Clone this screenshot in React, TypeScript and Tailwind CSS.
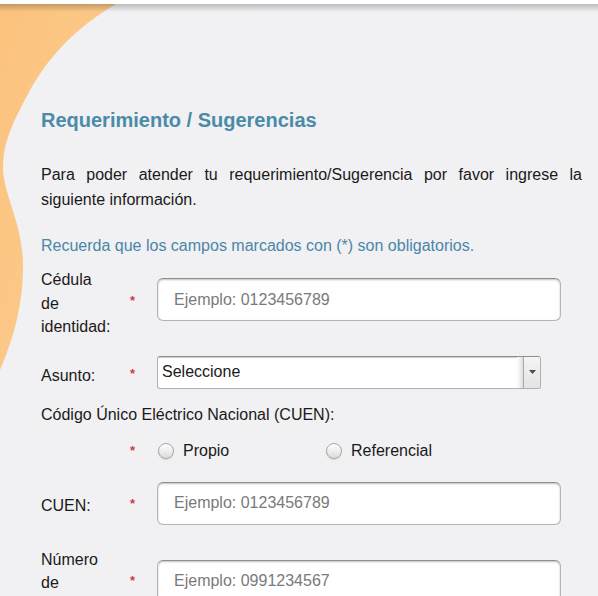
import React from "react";

const font = { fontFamily: '"Liberation Sans", Arial, sans-serif' };

function Star({ className = "" }: { className?: string }) {
  return (
    <span className={`w-[28px] shrink-0 pl-[1px] text-[13px] leading-[20px] font-bold text-[#d23a4c] ${className}`}>*</span>
  );
}

function TextInput({ placeholder, className = "" }: { placeholder: string; className?: string }) {
  return (
    <div
      className={`w-[404px] h-[43px] shrink-0 rounded-[6px] border border-[#b4b4b4] border-t-[#8e8e8e] bg-white shadow-[inset_0_1px_2px_rgba(0,0,0,0.25)] flex items-center pl-[16px] text-[16px] text-[#7a7a7a] ${className}`}
    >
      {placeholder}
    </div>
  );
}

function Radio({ label }: { label: string }) {
  return (
    <div className="flex items-center pl-[1px]">
      <span className="w-[16px] h-[16px] rounded-full border border-[#a8a8a8] bg-linear-to-b from-[#ffffff] to-[#dcdcdc] shadow-[0_1px_1px_rgba(0,0,0,0.12)]" />
      <span className="ml-[9px] text-[16px] leading-[24px] text-[#1a1a1a]">{label}</span>
    </div>
  );
}

export default function App() {
  return (
    <div style={font} className="relative w-full h-[596px] overflow-hidden bg-white text-[#1a1a1a]">
      <div className="h-[4px] bg-white" />
      <div className="relative h-[592px] bg-[#f1f0f2]">
        <svg className="absolute left-0 top-0" width="140" height="380" viewBox="0 0 140 380">
          <defs>
            <linearGradient id="og" x1="0" y1="0" x2="1" y2="1">
              <stop offset="0" stopColor="#fbc27d" />
              <stop offset="0.5" stopColor="#fcc887" />
              <stop offset="1" stopColor="#fbc47f" />
            </linearGradient>
          </defs>
          <path
            d="M0,0 L116,0 C78,22 48,52 28,90 C14,116 4,136 3,160 C2,190 23,218 23,262 C23,304 12,338 0,366 Z"
            fill="url(#og)"
          />
        </svg>
        <div className="absolute left-0 right-0 top-0 h-[8px] bg-linear-to-b from-[rgba(0,0,0,0.22)] to-transparent" />

        <div className="relative pl-[41px] pr-[16px]">
          <h1 className="pt-[104px] text-[20px] leading-[24px] font-bold text-[#4a8ba7]">
            Requerimiento / Sugerencias
          </h1>
          <p className="mt-[30px] text-[16px] leading-[25px] text-justify">
            Para poder atender tu requerimiento/Sugerencia por favor ingrese la siguiente información.
          </p>
          <p className="mt-[21px] text-[16px] leading-[25px] text-[#4a87aa]">
            Recuerda que los campos marcados con (*) son obligatorios.
          </p>

          {/* Cédula */}
          <div className="mt-[10px] flex items-start">
            <div className="w-[88px] shrink-0 text-[16px] leading-[23.5px]">
              Cédula
              <br />
              de
              <br />
              identidad:
            </div>
            <Star className="mt-[23px]" />
            <TextInput className="mt-[10px]" placeholder="Ejemplo: 0123456789" />
          </div>

          {/* Asunto */}
          <div className="mt-[17px] flex items-start">
            <div className="w-[88px] shrink-0 mt-[8px] text-[16px] leading-[24px]">Asunto:</div>
            <Star className="mt-[8px]" />
            <div className="w-[384px] h-[33px] shrink-0 flex rounded-[3px] border border-[#b0b0b0] border-t-[#8e8e8e] bg-white overflow-hidden">
              <div className="flex-1 pl-[4px] flex items-center text-[16px] text-[#1a1a1a] shadow-[inset_0_1px_1px_rgba(0,0,0,0.2)]">
                Seleccione
              </div>
              <div className="w-[6px] bg-linear-to-r from-[#ffffff] to-[#dedede]" />
              <div className="w-[1px] bg-[#a9a9a9]" />
              <div className="w-[16px] bg-linear-to-b from-[#f4f4f4] to-[#e4e4e4] flex items-center justify-center">
                <svg width="7" height="4" viewBox="0 0 7 4">
                  <path d="M0,0 L7,0 L3.5,4 Z" fill="#4a4a4a" />
                </svg>
              </div>
            </div>
          </div>

          {/* CUEN title */}
          <div className="mt-[14px] text-[16px] leading-[24px]">Código Único Eléctrico Nacional (CUEN):</div>

          {/* Radios */}
          <div className="mt-[12px] flex items-center">
            <div className="w-[88px] shrink-0" />
            <Star />
            <div className="w-[168px]">
              <Radio label="Propio" />
            </div>
            <Radio label="Referencial" />
          </div>

          {/* CUEN */}
          <div className="mt-[19px] flex items-start">
            <div className="w-[88px] shrink-0 mt-[12px] text-[16px] leading-[24px]">CUEN:</div>
            <Star className="mt-[12px]" />
            <TextInput className="h-[42px]" placeholder="Ejemplo: 0123456789" />
          </div>

          {/* Número */}
          <div className="mt-[23px] flex items-start">
            <div className="w-[88px] shrink-0 text-[16px] leading-[23.5px]">
              Número
              <br />
              de
              <br />
              teléfono:
            </div>
            <Star className="mt-[23px]" />
            <TextInput className="mt-[12px]" placeholder="Ejemplo: 0991234567" />
          </div>
        </div>
      </div>
    </div>
  );
}
